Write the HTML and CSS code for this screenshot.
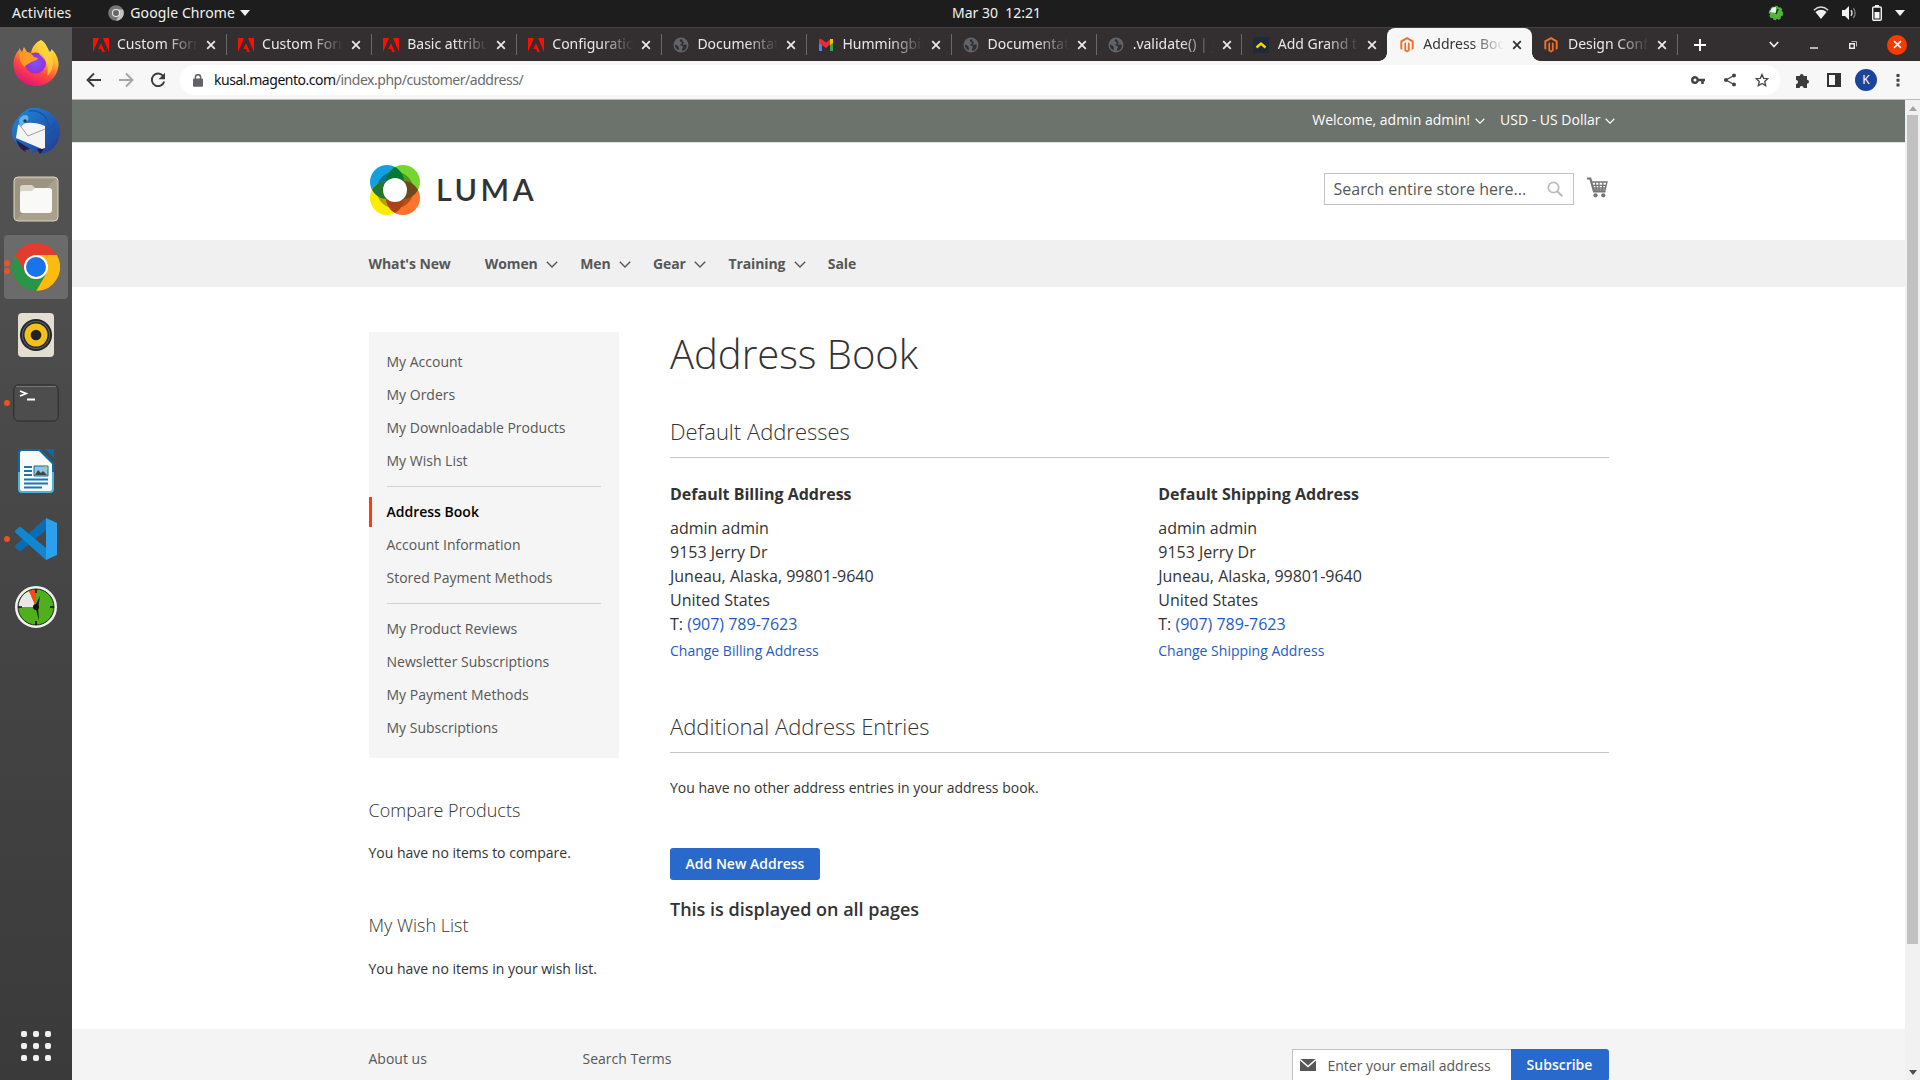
FILE: index.html
```html
<!DOCTYPE html>
<html lang="en">
<head>
<meta charset="utf-8">
<title>Address Book</title>
<link rel="stylesheet" href="styles.css">
</head>
<body>
<svg class="defs" width="0" height="0">
  <defs>
    <symbol id="adobe" viewBox="0 0 16 14"><path fill="#fa0f00" d="M0 0h6L0 14zM10 0h6v14zM8 5l4 9H9.3L8.1 11H5.3z"/></symbol>
    <symbol id="globe" viewBox="0 0 16 16"><circle cx="8" cy="8" r="7.5" fill="#60646a"/><path fill="#332f31" d="M9 2.2c-3 0-2.600 2-1 2.800 1.500.6 1 1.400 0 1.900-1 .6-1.500 1.200-.2 1.500 2 .3 2.800 1.200 1.700 2.600-.8 1-.7 2.400.3 2.900 2.600-.6 4.200-2.900 4-5.900-1.300-.8-2.400-1-3.200-.1-.7.3-1-.5-.3-1.100 1.200-.9.600-1.500-.2-2.200C9.500 4 9.500 3.300 9 2.200zM1.800 7.400c1.500.2 2.800.9 3.500 2.100.8 1.200 1 2.700.3 3.700-2.300-1-3.800-3-3.800-5.800z"/></symbol>
    <symbol id="magento" viewBox="0 0 16 18"><path fill="#f46f25" d="M8 0l7.500 4.300v9L13.300 14.600V5.600L8 2.500 2.700 5.600v9L.5 13.300v-9zM7 6v8.500l1 .6 1-.6V6l2 1.100v8.400L8 17.500l-3-2V7.100z"/></symbol>
    <symbol id="x" viewBox="0 0 10 10"><path d="M1.200 1.200l7.600 7.600M8.800 1.200L1.200 8.800" stroke="currentColor" stroke-width="1.800"/></symbol>
    <symbol id="chev" viewBox="0 0 12 7"><path d="M.8.8L6 6 11.200.8" fill="none" stroke="currentColor" stroke-width="1.400"/></symbol>
  </defs>
</svg>

<header class="topbar">
  <div class="topbar-left">
    <span>Activities</span>
    <span class="appmenu">
      <svg width="16" height="16" viewBox="0 0 16 16"><circle cx="8" cy="8" r="7.800" fill="#777"/><path d="M8 4.500h7a7.800 7.800 0 0 1-7 11.300l3.500-6z" fill="#c2c2c2"/><circle cx="8" cy="8" r="4" fill="#eee"/><circle cx="8" cy="8" r="3" fill="#666"/></svg>
      <span class="appname">Google Chrome</span>
      <svg width="10" height="6" viewBox="0 0 10 6"><path d="M0 0h10L5 6z" fill="#f2f2f2"/></svg>
    </span>
  </div>
  <div class="clock">Mar 30&nbsp; 12:21</div>
  <div class="tray">
    <svg class="tray-load" width="16" height="16" viewBox="0 0 16 16"><circle cx="8" cy="8" r="6.200" fill="#55b43c" stroke="#4fae3b" stroke-width="2" stroke-dasharray="3 1.600"/><path d="M8 8V2a6 6 0 0 0-6 5z" fill="#eee"/><path d="M8 9l2-5" stroke="#173d12" stroke-width="1.600"/></svg>
    <svg class="tray-wifi" width="16" height="14" viewBox="0 0 16 14"><path d="M.8 4.200Q8-2 15.200 4.200" fill="none" stroke="#ddd" stroke-width="1.400"/><path d="M2.400 6Q8 1.400 13.600 6L8 13z" fill="#f2f2f2"/></svg>
    <svg class="tray-vol" width="15" height="14" viewBox="0 0 15 14"><path d="M0 4h3l4-4v14l-4-4H0z" fill="#f2f2f2"/><path d="M9 4.200q2 2.800 0 5.600" fill="none" stroke="#ddd" stroke-width="1.400"/><path d="M11.300 2.200q3.700 4.800 0 9.600" fill="none" stroke="#888" stroke-width="1.200"/></svg>
    <svg class="tray-bat" width="10" height="16" viewBox="0 0 10 16"><path d="M3 0h4v2H3z" fill="#f2f2f2"/><rect x=".7" y="2" width="8.600" height="13.300" rx="1.200" fill="none" stroke="#f2f2f2" stroke-width="1.400"/><path d="M2.500 7h5v6.500h-5z" fill="#f2f2f2"/></svg>
    <svg width="10" height="6" viewBox="0 0 10 6"><path d="M0 0h10L5 6z" fill="#f2f2f2"/></svg>
  </div>
</header>

<div class="desktop">
  <nav class="dock">
    <div class="dock-item">
      <svg width="46" height="48" viewBox="0 0 46 48">
        <defs><linearGradient id="ff" x1=".8" y1="0" x2=".3" y2="1"><stop offset="0" stop-color="#fff44f"/><stop offset=".35" stop-color="#ffb52e"/><stop offset=".65" stop-color="#ff4a3d"/><stop offset="1" stop-color="#e0107a"/></linearGradient><radialGradient id="ffp"><stop offset="0" stop-color="#7a58f5"/><stop offset="1" stop-color="#9a2ddb"/></radialGradient></defs>
        <path fill="url(#ff)" d="M28 1c5 3 7 8 7.500 12 2 0 3-1 3-3C44 15 46 22 45.500 27 44 39 34.500 47 23 47 10 47 .5 37 .5 25 .5 19 3 14 6 11V9l3 4 2-5 3 5 4 1c1-6 5-11 10-13z"/>
        <circle cx="22.500" cy="24" r="10.500" fill="url(#ffp)"/>
        <path fill="#ff9a24" d="M7 14c6-2 12 0 14 4l4 1c-1 3-5 3-7 4-2 2-5 2-6 5-5-3-6-9-5-14z"/>
        <path fill="#ffd53a" opacity=".75" d="M28 1c4 5 12 12 12 22 0 7-3 12-6 14 2-8 0-15-6-20-4-3-4-10 0-16z"/>
      </svg>
    </div>
    <div class="dock-item">
      <svg width="48" height="48" viewBox="0 0 48 48">
        <defs><linearGradient id="tb" x1="0" y1="0" x2="1" y2="1"><stop offset="0" stop-color="#1d8be0"/><stop offset="1" stop-color="#24388f"/></linearGradient></defs>
        <path fill="url(#tb)" d="M18 1C30-1 47 6 48 24c0 12-8 23-22 23l3-3-10 2 2-4-8 1C5 40 0 33 0 24c0-5 3-11 6-13 3-5 7-8 12-10z"/>
        <path fill="#29194d" d="M4 33l14 9-5 1 1 2C9 43 6 38 4 33zM25 42l8-1-5 6z"/>
        <path fill="#f5f5f5" d="M4 31l2-13c8-3 18-3 27 1v22l-3 1z"/><path fill="none" stroke="#888" stroke-width=".8" d="M6 16l10 13 17-7"/>
        <path fill="#5ab6e8" d="M7 15c0-4 3-7 7-7 4 1 3 6-1 8l-4 4z"/><circle cx="13" cy="14" r="1.700" fill="#333"/>
        <path fill="none" stroke="#1557a8" stroke-width="1.500" d="M17 4c9-1 20 4 19 16M35 24l8-8M35 30l10-9M35 36l10-9"/>
      </svg>
    </div>
    <div class="dock-item">
      <svg width="46" height="46" viewBox="0 0 46 46"><rect x="1" y="1" width="44" height="44" rx="4" fill="#a9a08d" stroke="#d8d3c4"/><path d="M2 45V3h40z" fill="#958c78" opacity=".6"/><path d="M7 12q0-3 3-3h9l4 4h-1v5H7z" fill="#d9d4c8"/><path d="M7 18q0-3 3-3h9l3-3h14q3 0 3 3v19q0 3-3 3H10q-3 0-3-3z" fill="#f9f9f8"/></svg>
    </div>
    <div class="dock-item active">
      <i class="pip pip-a"></i><i class="pip pip-b"></i>
      <svg width="48" height="48" viewBox="0 0 48 48"><circle cx="24" cy="24" r="24" fill="#e33b2e"/><path d="M24 12h20.800A24 24 0 0 1 24 48l10.400-18z" fill="#fbbc0f"/><path d="M3.200 12L13.600 30q5 7 13 6l8-6L24 48A24 24 0 0 1 3.200 12z" fill="#2a9549"/><circle cx="24" cy="24" r="12" fill="#fff"/><circle cx="24" cy="24" r="10" fill="#1a73e8"/></svg>
    </div>
    <div class="dock-item">
      <svg width="38" height="46" viewBox="0 0 38 46"><rect x="1" y="1" width="36" height="44" rx="4" fill="#e3decf"/><circle cx="19" cy="23" r="16" fill="#24262c"/><circle cx="19" cy="23" r="14" fill="#596073"/><circle cx="19" cy="23" r="13" fill="#24262c"/><circle cx="19" cy="23" r="11.500" fill="#f4c01c"/><circle cx="19" cy="23" r="5.300" fill="#222"/></svg>
    </div>
    <div class="dock-item">
      <i class="pip"></i>
      <svg width="46" height="38" viewBox="0 0 46 38"><rect x=".8" y="1" width="44.400" height="36" rx="4.500" fill="#4d4d4d" stroke="#2a2a2a"/><path d="M3 2.500h40" stroke="#777"/><path d="M7 7l6 2.500L7 12M14 15.500h8" fill="none" stroke="#fff" stroke-width="1.800"/></svg>
    </div>
    <div class="dock-item">
      <svg width="38" height="46" viewBox="0 0 38 46"><path d="M5 1h18l14 14v26q0 4-4 4H5q-4 0-4-4V5q0-4 4-4z" fill="#0d6ba3"/><path d="M1 24h36v17q0 4-4 4H5q-4 0-4-4z" fill="#4fb2dd"/><path d="M5 3h17l13 13v25q0 2-2 2H5q-2 0-2-2V5q0-2 2-2z" fill="#fafafa"/><path d="M28 1h9v9z" fill="#12699c"/><path d="M7 19h8M7 23h8M7 27h8M7 31.500h24M7 35.500h24M7 39.500h18" stroke="#1878ad" stroke-width="2"/><path d="M17 18h14v10H17z" fill="#8cc8e8" stroke="#12699c"/><path d="M18 27l3-5 3 3 2-2 4 4z" fill="#444"/><path d="M27 18.500h3.500V21z" fill="#f0b71d"/></svg>
    </div>
    <div class="dock-item">
      <i class="pip"></i>
      <svg width="42" height="42" viewBox="0 0 42 42"><path d="M31 0L.8 27c-1 1-1 2 0 3l3 2.500q1 1 2.500 0L31 12z" fill="#0a6db3"/><path d="M31 42L.8 15c-1-1-1-2 0-3l3-2.500q1-1 2.500 0L31 30z" fill="#1187d2"/><path d="M31 0l11 5v32l-11 5z" fill="#2aa0ee"/></svg>
    </div>
    <div class="dock-item">
      <svg width="42" height="42" viewBox="0 0 42 42"><circle cx="21" cy="21" r="19.500" fill="#4faf1d" stroke="#f2f2f2" stroke-width="3"/><path d="M21 21H3.500A17.500 17.500 0 0 1 14 5z" fill="#e8e8e8"/><path d="M21 21L14 5a17.500 17.500 0 0 1 7-1.500z" fill="#ff4713"/><circle cx="21" cy="21" r="18" fill="none" stroke="#1d2a17" stroke-width="1"/><path d="M19.500 21L25 10l-2 12 1 13-3-12z" fill="#111"/><circle cx="21" cy="21" r="3" fill="#111"/><path d="M21 3v4M21 35v4M3 21h4M35 21h4" stroke="#111" stroke-width="1.500"/></svg>
    </div>
    <div class="apps"><i></i><i></i><i></i><i></i><i></i><i></i><i></i><i></i><i></i></div>
  </nav>

  <main class="browser">
    <div class="tabs">
      <div class="tab"><svg class="fav"><use href="#adobe"/></svg><span class="tab-title">Custom Form</span><svg class="tab-x"><use href="#x"/></svg></div>
      <div class="tab"><svg class="fav"><use href="#adobe"/></svg><span class="tab-title">Custom Form</span><svg class="tab-x"><use href="#x"/></svg></div>
      <div class="tab"><svg class="fav"><use href="#adobe"/></svg><span class="tab-title">Basic attributes</span><svg class="tab-x"><use href="#x"/></svg></div>
      <div class="tab"><svg class="fav"><use href="#adobe"/></svg><span class="tab-title">Configuration</span><svg class="tab-x"><use href="#x"/></svg></div>
      <div class="tab"><svg class="fav"><use href="#globe"/></svg><span class="tab-title">Documentation</span><svg class="tab-x"><use href="#x"/></svg></div>
      <div class="tab"><svg class="fav" viewBox="0 0 16 14"><path d="M1 2h3v11H1z" fill="#4285f4"/><path d="M12 2h3v11h-3z" fill="#34a853"/><path d="M12 1h3v4l-3 2z" fill="#fbbc04"/><path d="M1 2q1-2 3-.6L8 4.600l4-3.200V6.500L8 10 1 5z" fill="#ea2a35"/></svg><span class="tab-title">Hummingbird</span><svg class="tab-x"><use href="#x"/></svg></div>
      <div class="tab"><svg class="fav"><use href="#globe"/></svg><span class="tab-title">Documentation</span><svg class="tab-x"><use href="#x"/></svg></div>
      <div class="tab"><svg class="fav"><use href="#globe"/></svg><span class="tab-title">.validate() | jQuery</span><svg class="tab-x"><use href="#x"/></svg></div>
      <div class="tab last"><svg class="fav" viewBox="0 0 16 16"><path d="M0 0h16v16H0z" fill="#1f2b3d"/><path d="M3.500 10.500L8 6.500l4.500 4" fill="none" stroke="#ffd500" stroke-width="2.400"/></svg><span class="tab-title">Add Grand total</span><svg class="tab-x"><use href="#x"/></svg></div>
      <div class="tab current"><svg class="fav"><use href="#magento"/></svg><span class="tab-title">Address Book</span><svg class="tab-x"><use href="#x"/></svg></div>
      <div class="tab"><svg class="fav"><use href="#magento"/></svg><span class="tab-title">Design Config</span><svg class="tab-x"><use href="#x"/></svg></div>
      <svg class="newtab" width="14" height="14" viewBox="0 0 14 14"><path d="M7 1v12M1 7h12" stroke="#fff" stroke-width="1.900"/></svg>
      <div class="win">
        <svg width="10" height="7" viewBox="0 0 10 7"><path d="M.8 1L5 5.500 9.200 1" fill="none" stroke="#eee" stroke-width="1.700"/></svg>
        <svg width="8" height="8" viewBox="0 0 8 8"><path d="M0 7h8" stroke="#eee" stroke-width="1.400"/></svg>
        <svg width="8" height="8" viewBox="0 0 8 8"><path d="M.7 2.700h4.600v4.600H.7z" fill="none" stroke="#eee" stroke-width="1.400"/><path d="M2.500.5h5v5" fill="none" stroke="#bbb"/></svg>
        <span class="win-close"><svg width="9" height="9"><use href="#x"/></svg></span>
      </div>
    </div>

    <div class="toolbar">
      <svg width="16" height="16" viewBox="0 0 16 16"><path d="M15 8H2M8 1.500L1.500 8 8 14.500" fill="none" stroke="#3c3c3c" stroke-width="1.900"/></svg>
      <svg width="16" height="16" viewBox="0 0 16 16"><path d="M1 8h13M8 1.500L14.500 8 8 14.500" fill="none" stroke="#a5a5a5" stroke-width="1.900"/></svg>
      <svg width="16" height="16" viewBox="0 0 16 16"><path d="M13.300 4.200A6.300 6.300 0 1 0 14.200 9.500" fill="none" stroke="#3c3c3c" stroke-width="1.900"/><path d="M15 .8v6.400H8.600z" fill="#3c3c3c"/></svg>
      <div class="omnibox">
        <svg width="10" height="13" viewBox="0 0 10 13"><rect y="4.500" width="10" height="8.300" rx="1" fill="#5f6368"/><path d="M2.400 5V3.300a2.600 2.600 0 0 1 5.200 0V5" fill="none" stroke="#5f6368" stroke-width="1.500"/></svg>
        <span class="url"><b>kusal.magento.com</b>/index.php/customer/address/</span>
        <svg width="14" height="8" viewBox="0 0 14 8"><path fill="#444" fill-rule="evenodd" d="M4 0a4 4 0 0 1 3.800 2.700H14v2.600h-1.200V8h-2.600V5.300H7.800A4 4 0 1 1 4 0zm0 2.500a1.500 1.500 0 1 0 0 3 1.500 1.500 0 0 0 0-3z"/></svg>
        <svg width="14" height="14" viewBox="0 0 14 14"><path d="M11 2.500L3 7l8 4.500" fill="none" stroke="#444" stroke-width="1.300"/><circle cx="11" cy="2.500" r="2" fill="#444"/><circle cx="3" cy="7" r="2" fill="#444"/><circle cx="11" cy="11.500" r="2" fill="#444"/></svg>
        <svg width="14" height="14" viewBox="0 0 14 14"><path d="M7 1.400l1.700 3.900 4.200.4-3.200 2.800 1 4.200L7 10.500l-3.700 2.200 1-4.200L1.100 5.700l4.200-.4z" fill="none" stroke="#444" stroke-width="1.300"/></svg>
      </div>
      <div class="tools">
        <svg width="15" height="15" viewBox="0 0 15 15"><path fill="#3c3c3c" d="M1 3h3.700a2 2 0 1 1 4 0H12v3.800a2 2 0 1 1 0 4V15H8.600a2 2 0 0 0-4 0H1v-4a2 2 0 0 0 0-4z"/></svg>
        <svg width="14" height="14" viewBox="0 0 14 14"><path d="M0 0h14v14H0zM2 2v10h6V2z" fill="#333" fill-rule="evenodd"/></svg>
        <span class="avatar">K</span>
        <svg width="4" height="14" viewBox="0 0 4 14"><path d="M.5 1h3v3h-3zM.5 5.700h3v3h-3zM.5 10.400h3v3h-3z" fill="#444"/></svg>
      </div>
    </div>

    <div class="viewport">
      <div class="page">
        <div class="panel">
          <div class="wrap panel-in">
            <span>Welcome, admin admin!</span><svg class="chev-s"><use href="#chev"/></svg>
            <span class="cur">USD - US Dollar</span><svg class="chev-s"><use href="#chev"/></svg>
          </div>
        </div>
        <div class="wrap head">
          <a class="logo">
            <svg width="50" height="50" viewBox="0 0 50 50">
              <defs>
                <clipPath id="cb"><circle cx="17" cy="17" r="17"/></clipPath>
                <clipPath id="cg"><circle cx="33" cy="17" r="17"/></clipPath>
                <clipPath id="cy"><circle cx="17" cy="33" r="17"/></clipPath>
              </defs>
              <circle cx="17" cy="17" r="17" fill="#12a1e0"/><circle cx="33" cy="17" r="17" fill="#76d52e"/>
              <circle cx="17" cy="33" r="17" fill="#fcec00"/><circle cx="33" cy="33" r="17" fill="#ff7229"/>
              <circle cx="25" cy="25" r="18.500" fill="#000" opacity=".3"/>
              <circle cx="33" cy="17" r="17" fill="#007836" clip-path="url(#cb)"/>
              <circle cx="17" cy="33" r="17" fill="#227730" clip-path="url(#cb)"/>
              <circle cx="33" cy="33" r="17" fill="#6a4a1b" clip-path="url(#cg)"/>
              <circle cx="33" cy="33" r="17" fill="#ab4317" clip-path="url(#cy)"/>
              <circle cx="25" cy="25" r="12" fill="#fff"/>
            </svg>
            <span class="logo-text">LUMA</span>
          </a>
          <div class="search"><span>Search entire store here...</span><svg width="16" height="16" viewBox="0 0 16 16"><circle cx="6.500" cy="6.500" r="5.200" fill="none" stroke="#bdbdbd" stroke-width="1.800"/><path d="M10.200 10.200l5 5" stroke="#bdbdbd" stroke-width="2.200"/></svg></div>
          <svg class="cart" width="21" height="21" viewBox="0 0 21 21"><path d="M0 1.500h3.300L7 14.500h11.500" fill="none" stroke="#757575" stroke-width="2.200"/><path d="M4.500 5H20l-2 8H7M5.500 8.300h14M6.500 11h12.300M8.300 5l1.200 8M12 5v8M16 5l-.8 8" fill="none" stroke="#757575" stroke-width="1.300"/><circle cx="8.500" cy="18.300" r="2.100" fill="#757575"/><circle cx="16.300" cy="18.300" r="2.100" fill="#757575"/></svg>
        </div>
        <div class="nav">
          <div class="wrap nav-in">
            <a class="nav-first">What's New</a>
            <a>Women<svg class="chev-n"><use href="#chev"/></svg></a>
            <a>Men<svg class="chev-n"><use href="#chev"/></svg></a>
            <a>Gear<svg class="chev-n"><use href="#chev"/></svg></a>
            <a>Training<svg class="chev-n"><use href="#chev"/></svg></a>
            <a>Sale</a>
          </div>
        </div>
        <div class="wrap cols">
          <aside class="side">
            <ul class="menu">
              <li>My Account</li><li>My Orders</li><li>My Downloadable Products</li><li>My Wish List</li>
              <li class="rule"></li>
              <li class="sel">Address Book</li><li>Account Information</li><li>Stored Payment Methods</li>
              <li class="rule"></li>
              <li>My Product Reviews</li><li>Newsletter Subscriptions</li><li>My Payment Methods</li><li>My Subscriptions</li>
            </ul>
            <section class="side-block compare"><h3>Compare Products</h3><p>You have no items to compare.</p></section>
            <section class="side-block wish"><h3>My Wish List</h3><p>You have no items in your wish list.</p></section>
          </aside>
          <article class="content">
            <h1>Address Book</h1>
            <h2>Default Addresses</h2>
            <div class="addresses">
              <div><h4>Default Billing Address</h4><address>admin admin<br>9153 Jerry Dr<br>Juneau, Alaska, 99801-9640<br>United States<br>T: <a>(907) 789-7623</a></address><a class="change">Change Billing Address</a></div>
              <div><h4>Default Shipping Address</h4><address>admin admin<br>9153 Jerry Dr<br>Juneau, Alaska, 99801-9640<br>United States<br>T: <a>(907) 789-7623</a></address><a class="change">Change Shipping Address</a></div>
            </div>
            <h2>Additional Address Entries</h2>
            <p class="empty">You have no other address entries in your address book.</p>
            <button class="btn">Add New Address</button>
            <p class="notice">This is displayed on all pages</p>
          </article>
        </div>
        <footer class="foot">
          <div class="wrap foot-in">
            <span class="foot-link">About us</span><span class="foot-link">Search Terms</span>
            <div class="news"><svg width="16" height="12" viewBox="0 0 16 12"><path d="M0 0h16v12H0z" fill="#575757"/><path d="M0 .5l8 7 8-7" fill="none" stroke="#fff" stroke-width="1.500"/></svg><span class="news-hint">Enter your email address</span></div>
            <button class="sub">Subscribe</button>
          </div>
        </footer>
      </div>
      <div class="scroll">
        <svg width="8" height="5" viewBox="0 0 8 5"><path d="M0 5h8L4 0z" fill="#a3a3a3"/></svg>
        <div class="thumb"></div>
        <svg width="8" height="5" viewBox="0 0 8 5"><path d="M0 0h8L4 5z" fill="#505050"/></svg>
      </div>
    </div>
  </main>
</div>
</body>
</html>
```
FILE: styles.css
```css
* { box-sizing: border-box; }
body {
  margin: 0;
  width: 1920px;
  height: 1080px;
  overflow: hidden;
  display: flex;
  flex-direction: column;
  font: 14px/20px "Open Sans", "Noto Sans", sans-serif;
  color: #333;
}
svg { display: block; flex: none; }
.defs { position: absolute; }
h1, h2, h3, h4, p, ul { margin: 0; padding: 0; font-weight: 400; }
button { border: 0; padding: 0; font: inherit; }

/* system bar */
.topbar {
  flex: none;
  height: 27px;
  background: #1d1d1d;
  color: #f2f2f2;
  display: grid;
  grid-template-columns: 1fr auto 1fr;
  align-items: center;
  font-family: "Noto Sans", sans-serif;
  font-size: 14px;
  padding-bottom: 1px;
}
.topbar-left { display: flex; padding-left: 12px; letter-spacing: .1px; }
.appmenu { display: flex; align-items: center; margin-left: 37px; }
.appname { margin: 0 5px 0 6px; }
.clock { padding-left: 73px; }
.tray { display: flex; align-items: center; justify-content: flex-end; padding-right: 15px; }
.tray-load { margin-right: 29px; }
.tray-wifi { margin-right: 13px; }
.tray-vol { margin-right: 15px; }
.tray-bat { margin-right: 13px; }

.desktop { flex: 1; display: flex; min-height: 0; }

/* dock */
.dock {
  flex: none;
  width: 72px;
  padding: 2px 4px 0;
  background: linear-gradient(#585858, #4a4a4a 35%, #3a3a3a);
  display: flex;
  flex-direction: column;
}
.dock-item {
  height: 64px;
  margin: 2px 0;
  flex: none;
  display: flex;
  align-items: center;
  justify-content: center;
  position: relative;
}
.dock-item.active { background: #6b6b6b; border-radius: 4px; }
.pip { position: absolute; left: 0; top: 29px; width: 6px; height: 6px; border-radius: 50%; background: #e95420; }
.pip-a { top: 25px; }
.pip-b { top: 33px; }
.apps {
  margin: auto auto 19px;
  display: grid;
  grid-template-columns: repeat(3, 6px);
  gap: 6px;
}
.apps i { height: 6px; border-radius: 2px; background: #f0f0ee; }

/* browser chrome */
.browser { flex: 1; min-width: 0; display: flex; flex-direction: column; font-family: "Noto Sans", sans-serif; }
.tabs {
  flex: none;
  height: 34px;
  background: #332f31;
  border-top: 1px solid #444142;
  padding-left: 9.5px;
  display: flex;
  align-items: center;
}
.tab {
  flex: none;
  width: 145.1px;
  height: 33px;
  padding: 0 0 0 11px;
  display: flex;
  align-items: center;
  color: #e8e8e8;
  position: relative;
}
.tab::after { content: ""; position: absolute; right: 0; top: 6px; width: 1px; height: 21px; background: #6b6869; }
.tab.last::after { display: none; }
.fav { width: 16px; height: 16px; margin-right: 8.5px; }
.tab-title {
  width: 81px;
  padding-bottom: 2px;
  overflow: hidden;
  white-space: nowrap;
  -webkit-mask-image: linear-gradient(90deg, #000 60%, transparent);
  mask-image: linear-gradient(90deg, #000 60%, transparent);
}
.tab-x { width: 10px; height: 10px; margin-left: 8px; }
.tab.current { background: #f7f7f7; color: #333; border-radius: 8px 8px 0 0; padding-left: 11.5px; }
.tab.current::after, .tab.current::before {
  content: "";
  position: absolute;
  top: auto;
  bottom: 0;
  width: 8px;
  height: 8px;
}
.tab.current::before { left: -8px; background: radial-gradient(circle at 0 0, transparent 7.5px, #f7f7f7 8px); }
.tab.current::after { right: -8px; background: radial-gradient(circle at 100% 0, transparent 7.5px, #f7f7f7 8px); }
.newtab { margin-left: 15px; }
.win { margin-left: auto; padding-right: 13px; display: flex; align-items: center; gap: 31px; }
.win-close { width: 20px; height: 20px; margin-left: -1px; border-radius: 50%; background: #f43b00; color: #fff; display: flex; align-items: center; justify-content: center; }

.toolbar {
  flex: none;
  height: 39px;
  background: #f7f7f7;
  border-bottom: 1px solid #b9bcb9;
  display: flex;
  align-items: center;
  gap: 16px;
  padding-left: 14px;
}
.omnibox {
  width: 1600px;
  height: 30px;
  margin-left: -2px;
  border-radius: 15px;
  background: #fff;
  padding: 0 11px 0 13px;
  display: flex;
  align-items: center;
  gap: 18px;
}
.url { flex: 1; margin-left: -7px; color: #6b6b6b; letter-spacing: -.47px; }
.url b { font-weight: 400; color: #111; }
.tools { display: flex; align-items: center; margin-left: -1px; }
.tools svg { margin-right: 17px; }
.avatar { width: 22px; height: 22px; margin: 0 19px 0 -3px; border-radius: 50%; background: #1b459c; color: #fff; font-size: 12px; line-height: 22px; text-align: center; }
.tools svg:last-child { margin: 0; }

/* page */
.viewport { flex: 1; min-height: 0; display: flex; font-family: "Open Sans", sans-serif; }
.page { flex: 1; min-width: 0; height: 980px; overflow: hidden; background: #fff; }
.wrap { width: 1240px; margin: 0 auto; }
.panel { height: 43px; background: #6c726c; border-bottom: 1px solid #e3e3e3; color: #fff; }
.panel-in { height: 40px; display: flex; align-items: center; justify-content: flex-end; }
.panel-in svg:last-child { margin: 1px -6px 0 4px; }
.chev-s { width: 10px; height: 6px; margin: 1px 0 0 5px; stroke-width: 2; }
.cur { margin-left: 15px; }
.head { height: 97px; display: flex; align-items: flex-start; }
.logo { display: flex; align-items: center; margin: 22px auto 0 1px; }
.logo-text { font: 600 30.5px/48px Lato, sans-serif; letter-spacing: 3.5px; color: #333; margin: 0 0 2px 16.5px; }
.search { width: 250px; height: 32px; margin-top: 30px; border: 1px solid #c2c2c2; padding: 0 10px 0 9px; font-size: 16px; color: #575757; display: flex; align-items: center; justify-content: space-between; }
.cart { margin: 34px 1px 0 13px; }
.nav { height: 47px; background: #f0f0f0; }
.nav-in { height: 47px; display: flex; align-items: center; font-weight: 700; color: #575757; letter-spacing: -.1px; }
.nav-in a { display: flex; align-items: center; margin-right: 22px; }
.nav-in .nav-first { margin-right: 34px; }
.chev-n { width: 12px; height: 7px; margin: 2px 0 0 8.5px; }
.cols { display: flex; align-items: flex-start; gap: 51px; padding-top: 45px; height: 742px; }

.side { width: 250.5px; }
.menu { list-style: none; background: #f5f5f5; padding: 15px 0; height: 426px; display: flex; flex-direction: column; gap: 3px; color: #575757; }
.menu li { height: 30px; padding: 5px 15px; border-left: 3px solid transparent; }
.menu .rule { height: 1px; padding: 0; border: 0; background: #d1d1d1; margin: 7px 18px; }
.menu .sel { border-left-color: #ff3c0a; color: #000; font-weight: 600; }
.compare { margin: 42px 0 52px; }
.side-block h3 { font-size: 18px; font-weight: 300; margin-bottom: 23px; }
.wish h3 { margin-bottom: 24px; }

.content { width: 938.5px; }
h1 { font-size: 40px; line-height: 44px; font-weight: 300; margin-bottom: 43px; }
h2 { font-size: 22px; line-height: 24px; font-weight: 300; padding-bottom: 14px; border-bottom: 1px solid #c6c6c6; }
.addresses { display: grid; grid-template-columns: 1fr 1fr; column-gap: 38px; padding: 24px 0 53px; }
h4 { font-size: 16px; line-height: 24px; font-weight: 700; margin-bottom: 10px; }
address { font: 16px/24px "Open Sans", sans-serif; margin-bottom: 5px; }
address a, .change { color: #1e5cc3; }
.change { display: block; }
.empty { margin: 25px 0 50px; }
.btn { display: block; width: 150px; height: 32px; border-radius: 3px; background: #2969cb; color: #fff; font-weight: 600; }
.notice { margin-top: 17px; font-size: 18px; line-height: 24px; font-weight: 600; }

.foot { background: #f4f4f4; height: 120px; }
.foot-in { display: flex; padding-top: 20px; color: #575757; }
.foot-link { width: 214px; }
.news { margin-left: auto; width: 219px; height: 32px; background: #fff; border: 1px solid #c2c2c2; border-right: 0; padding-left: 7px; display: flex; align-items: center; gap: 12px; }
.news-hint { padding-top: 2px; }
.sub { width: 98px; height: 32px; border-radius: 0 3px 3px 0; background: #2969cb; color: #fff; font-weight: 600; }

.scroll { flex: none; width: 15px; background: #f1f1f1; display: flex; flex-direction: column; align-items: center; padding: 6px 0 5px; }
.thumb { width: 11px; height: 829px; margin: 4px 0 auto; background: #c1c1c1; }
```
